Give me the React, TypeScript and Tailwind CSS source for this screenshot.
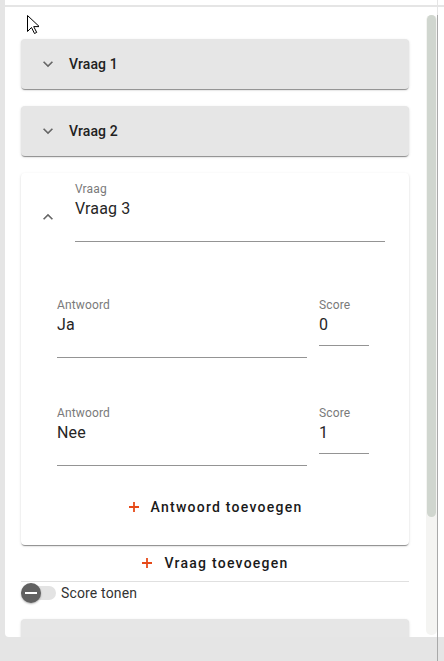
import React from 'react';

const cardShadow =
  'shadow-[0_2px_1px_-1px_rgba(0,0,0,0.3),0_1px_1px_0_rgba(0,0,0,0.14),0_1px_3px_0_rgba(0,0,0,0.12)]';

const Chevron = ({ up = false }: { up?: boolean }) => (
  <svg viewBox="0 0 24 24" className={up ? 'w-5 h-5 rotate-180 fill-[#666]' : 'w-5 h-5 fill-[#666]'}>
    <path d="M16.59 8.59 12 13.17 7.41 8.59 6 10l6 6 6-6z" />
  </svg>
);

const Plus = () => (
  <svg viewBox="0 0 12 12" className="w-[12px] h-[12px] stroke-[#e64a19]" strokeWidth="1.8">
    <path d="M6 1v10M1 6h10" />
  </svg>
);

const CollapsedQuestion = ({ title }: { title: string }) => (
  <div className={`h-[50px] rounded-[4px] bg-[#e6e6e6] flex items-center pl-[17px] ${cardShadow}`}>
    <Chevron />
    <span className="ml-[11px] text-[14px] font-medium tracking-[0.1px] text-[#212121]">{title}</span>
  </div>
);

const Field = ({
  label,
  value,
  width,
  pb,
}: {
  label: string;
  value: string;
  width: string;
  pb: string;
}) => (
  <div className={`${width} shrink-0`}>
    <div className="h-[16px] leading-[16px] text-[12px] tracking-[0.15px] text-[#7a7a7a]">{label}</div>
    <div
      className={`h-[24px] leading-[24px] text-[16px] tracking-[0.15px] text-[#262626] box-content border-b border-[#949494] ${pb}`}
    >
      {value}
    </div>
  </div>
);

const TextButton = ({ children }: { children: React.ReactNode }) => (
  <button type="button" className="h-[36px] w-full flex items-center justify-center gap-[11px]">
    <Plus />
    <span className="text-[14px] font-medium tracking-[1.25px] text-[#1a1a1a]">{children}</span>
  </button>
);

const Cursor = () => (
  <svg viewBox="0 0 12 19" className="absolute left-[27px] top-[15px] w-[12px] h-[19px]">
    <path
      d="M0.5 0.5v16l4-4 3 6 2.2-1.1-3-5.8h5.6z"
      fill="#fff"
      stroke="#000"
      strokeWidth="1"
      strokeLinejoin="round"
    />
  </svg>
);

export default function App() {
  return (
    <div className="relative w-[444px] h-[661px] bg-[#e5e5e5] flex overflow-hidden font-['Roboto',sans-serif]">
      {/* main area */}
      <div className="w-[437px] flex flex-col">
        <div className="h-[5px] ml-[5px] bg-white" />
        <div className="mt-[2px] ml-[5px] h-[630px] bg-white rounded-bl-[4px] flex overflow-hidden">
          <div className="w-[421px] pl-[16px] pr-[17px] pt-[32px]">
            <CollapsedQuestion title="Vraag 1" />
            <div className="mt-[17px]">
              <CollapsedQuestion title="Vraag 2" />
            </div>

            {/* expanded question */}
            <div className={`mt-[17px] bg-white rounded-[4px] ${cardShadow}`}>
              <div className="flex items-start pl-[17px] pr-[24px]">
                <div className="mt-[34px]">
                  <Chevron up />
                </div>
                <div className="ml-[17px] flex-1 pt-[8px]">
                  <div className="h-[16px] leading-[16px] text-[12px] tracking-[0.15px] text-[#7a7a7a]">Vraag</div>
                  <div className="h-[24px] leading-[24px] text-[16px] tracking-[0.15px] text-[#262626] box-content pb-[20px] border-b border-[#949494]">
                    Vraag 3
                  </div>
                </div>
              </div>

              <div className="mt-[55px] flex items-start gap-[12px] pl-[36px]">
                <Field label="Antwoord" value="Ja" width="w-[250px]" pb="pb-[20px]" />
                <Field label="Score" value="0" width="w-[50px]" pb="pb-[8px]" />
              </div>
              <div className="mt-[47px] flex items-start gap-[12px] pl-[36px]">
                <Field label="Antwoord" value="Nee" width="w-[250px]" pb="pb-[20px]" />
                <Field label="Score" value="1" width="w-[50px]" pb="pb-[8px]" />
              </div>

              <div className="mt-[23px] pb-[20px]">
                <TextButton>Antwoord toevoegen</TextButton>
              </div>
            </div>

            <TextButton>Vraag toevoegen</TextButton>
            <div className="h-px bg-[#e0e0e0]" />

            <div className="h-[22px] flex items-center">
              <div className="relative w-[36px] h-[20px] flex items-center">
                <div className="ml-[4px] w-[31px] h-[14px] rounded-full bg-[#e3e3e3]" />
                <div className="absolute left-0 top-0 w-[20px] h-[20px] rounded-full bg-[#616161] flex items-center justify-center shadow-[0_1px_2px_rgba(0,0,0,0.3)]">
                  <div className="w-[12px] h-[2px] bg-white" />
                </div>
              </div>
              <span className="ml-[4px] text-[14px] tracking-[0.15px] text-[#333]">Score tonen</span>
            </div>

            <div className={`mt-[15px] h-[60px] rounded-[4px] bg-[#e6e6e6] ${cardShadow}`} />
          </div>

          {/* scrollbar */}
          <div className="w-[11px] pt-[8px]">
            <div className="h-[620px] rounded-[5px] bg-[#f4f4f2] pl-[1px] pr-[1px]">
              <div className="h-[502px] rounded-full bg-[#d0d6cf]" />
            </div>
          </div>
        </div>
      </div>

      {/* window edge */}
      <div className="w-px mt-[15px] bg-[#a9a9a9]" />
      <div className="w-[6px] flex flex-col">
        <div className="h-[5px] bg-white" />
        <div className="mt-[2px] h-[630px] bg-white" />
      </div>

      <Cursor />
    </div>
  );
}
